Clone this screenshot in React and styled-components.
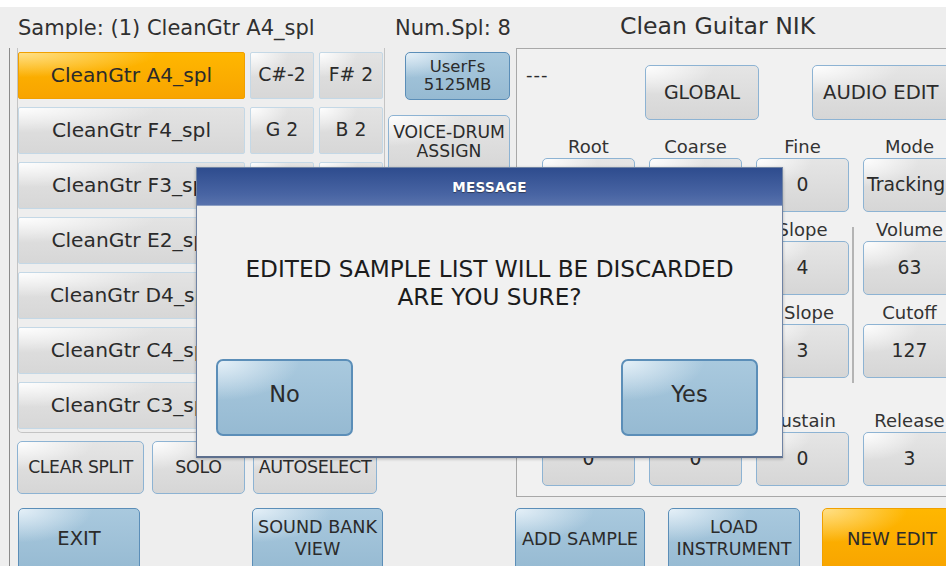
import React from 'react';
import styled, { createGlobalStyle, css } from 'styled-components';

const GlobalStyle = createGlobalStyle`
  html, body {
    margin: 0;
    padding: 0;
    background: #ffffff;
  }
  body {
    font-family: "DejaVu Sans", "Liberation Sans", sans-serif;
  }
`;

// glossy highlight in the upper left corner, shared by every pad
const gloss = (c) =>
  `radial-gradient(ellipse 85% 75% at 0% 0%, ${c} 0%, rgba(255,255,255,0) 72%)`;

const tones = {
  gray: {
    bg: `${gloss('rgba(255,255,255,0.95)')}, linear-gradient(#e5e5e5, #d6d6d6)`,
    border: '#8db3d3',
  },
  list: {
    bg: `${gloss('rgba(255,255,255,0.95)')}, linear-gradient(#e3e3e3, #d7d7d7)`,
    border: '#c4d8e6',
  },
  blue: {
    bg: `${gloss('rgba(232,242,249,0.95)')}, linear-gradient(#a9c9de, #96bad2)`,
    border: '#5b8eb8',
  },
  orange: {
    bg: `${gloss('rgba(255,228,150,0.9)')}, linear-gradient(#ffb700, #f8a400)`,
    border: '#f0a000',
  },
};

const Screen = styled.div`
  position: relative;
  width: 946px;
  height: 566px;
  box-sizing: border-box;
  border-top: 7px solid #ffffff;
  background: #eeeeee;
  overflow: hidden;
  color: #2b2b2b;
`;

const Header = styled.div`
  height: 41px;
  display: grid;
  grid-template-columns: 377px 122px 1fr;
  align-items: center;
  padding-left: 18px;
  font-size: 21px;
  color: #303030;
  white-space: nowrap;
`;

const Title = styled.div`
  padding-left: 103px;
  font-size: 23.6px;
  margin-top: -4px;
`;

const Content = styled.div`
  margin-left: 9px;
  border-left: 1px solid #8a8a8a;
`;

const Main = styled.div`
  display: flex;
  height: 452px;
`;

const LeftCol = styled.div`
  width: 368px;
  flex-shrink: 0;
  padding-left: 7px;
  display: flex;
  flex-direction: column;
`;

const ListBox = styled.div`
  height: 385px;
  flex-shrink: 0;
  box-sizing: border-box;
  border: 1px solid #c4c4c4;
  border-top: none;
  border-radius: 0 0 5px 5px;
  padding: 4px 0 0 0;
  display: grid;
  grid-template-columns: 227px 64px 64px;
  grid-auto-rows: 47px;
  column-gap: 5px;
  row-gap: 8px;
`;

const Pad = styled.div`
  display: flex;
  flex-shrink: 0;
  align-items: center;
  justify-content: center;
  text-align: center;
  box-sizing: border-box;
  border-radius: ${(p) => p.$radius || 5}px;
  border: 1.5px solid ${(p) => tones[p.$tone || 'gray'].border};
  background: ${(p) => tones[p.$tone || 'gray'].bg};
  font-size: ${(p) => p.$size || 18}px;
  line-height: 1.2;
  white-space: nowrap;
  color: #2b2b2b;
  ${(p) =>
    p.$w &&
    css`
      width: ${p.$w}px;
    `}
  ${(p) =>
    p.$h &&
    css`
      height: ${p.$h}px;
    `}
`;

const ActionRow = styled.div`
  display: flex;
  gap: 8px;
  margin-top: 8px;
  height: 53px;
  letter-spacing: -0.3px;
`;

const MidCol = styled.div`
  width: 124px;
  flex-shrink: 0;
  margin-left: 3px;
  display: flex;
  flex-direction: column;
  align-items: flex-start;
`;

const RightPanel = styled.div`
  width: 450px;
  height: 449px;
  flex-shrink: 0;
  margin-left: 4px;
  box-sizing: border-box;
  border: 1px solid #a8a8a8;
  background: #f1f1f1;
  display: flex;
  flex-direction: column;
`;

const TopBar = styled.div`
  display: flex;
  flex-shrink: 0;
  align-items: flex-start;
  padding: 16px 0 0 9px;
  height: 71px;
`;

const Dash = styled.div`
  width: 119px;
  font-size: 18px;
  line-height: 20px;
  letter-spacing: 1px;
`;

// value columns with a thin spacer column for the divider line
const ParamGrid = styled.div`
  display: grid;
  grid-template-columns: 93px 14px 93px 14px 93px 3px 2px 9px 93px;
  row-gap: 7px;
  padding-left: 25px;
`;

const paramCols = [1, 3, 5, 9];

const Param = styled.div`
  grid-column: ${(p) => p.$col};
  display: flex;
  flex-direction: column;
  ${(p) =>
    p.$late &&
    css`
      margin-top: 25px;
    `}
`;

const Label = styled.div`
  height: 22px;
  line-height: 22px;
  text-align: center;
  font-size: 18px;
  color: #333;
`;

const Divider = styled.div`
  grid-column: 7;
  grid-row: 2 / span 2;
  margin: 8px 0 -5px;
  background: #b4b4b4;
`;

const Footer = styled.div`
  display: flex;
  padding: 8px 0 0 8px;
  height: 66px;
  box-sizing: border-box;
`;

const Dialog = styled.div`
  position: absolute;
  left: 196px;
  top: 160px;
  width: 587px;
  height: 291px;
  box-sizing: border-box;
  border: 1px solid #6f83a4;
  border-bottom: 2px solid #5d6f8e;
  background: #f1f1f1;
  display: flex;
  flex-direction: column;
  box-shadow: 0 1px 3px rgba(0, 0, 0, 0.25);
`;

const DialogTitle = styled.div`
  height: 37px;
  display: flex;
  align-items: center;
  justify-content: center;
  background: linear-gradient(#2e4c8e, #4864a3 70%, #5872ac);
  border-bottom: 1px solid #8ea0c4;
  color: #ffffff;
  font-weight: bold;
  font-size: 13.5px;
  letter-spacing: 0.3px;
  text-shadow: 0 1px 1px #303a55;
`;

const DialogText = styled.div`
  margin-top: 49px;
  text-align: center;
  font-size: 23.2px;
  line-height: 28px;
  color: #1c1c1c;
`;

const DialogButtons = styled.div`
  display: flex;
  justify-content: space-between;
  padding: 0 24px 0 19px;
  margin-top: 48px;
`;

const samples = [
  ['CleanGtr A4_spl', 'C#-2', 'F# 2'],
  ['CleanGtr F4_spl', 'G 2', 'B 2'],
  ['CleanGtr F3_spl', 'C 3', 'E 3'],
  ['CleanGtr E2_spl', 'F 3', 'A 3'],
  ['CleanGtr D4_spl', 'A#3', 'D 4'],
  ['CleanGtr C4_spl', 'D#4', 'G 4'],
  ['CleanGtr C3_spl', 'G#4', 'G 8'],
];

const params = [
  ['Root', 'A4'],
  ['Coarse', '0'],
  ['Fine', '0'],
  ['Mode', 'Tracking'],
  ['Low Key', 'C-2'],
  ['High Key', 'G 8'],
  ['Slope', '4'],
  ['Volume', '63'],
  ['Low Vel', '0'],
  ['High Vel', '127'],
  ['F.Slope', '3'],
  ['Cutoff', '127'],
  ['Attack', '0'],
  ['Decay', '0'],
  ['Sustain', '0'],
  ['Release', '3'],
];

const footerButtons = [
  { text: 'EXIT', w: 122, gap: 0, tone: 'blue', size: 19.5 },
  { text: 'SOUND BANK\nVIEW', w: 131, gap: 112, tone: 'blue', size: 17.6 },
  { text: 'ADD SAMPLE', w: 130, gap: 132, tone: 'blue', size: 17.8 },
  { text: 'LOAD\nINSTRUMENT', w: 132, gap: 23, tone: 'blue', size: 17.5 },
  { text: 'NEW EDIT', w: 140, gap: 22, tone: 'orange', size: 18 },
];

const FootPad = styled(Pad)`
  margin-left: ${(p) => p.$gap}px;
  height: 64px;
  align-items: flex-start;
  padding-top: ${(p) => (p.$two ? 7 : 19)}px;
  line-height: 22px;
  white-space: pre-line;
`;

export default function App() {
  return (
    <>
      <GlobalStyle />
      <Screen>
        <Header>
          <div>Sample: (1) CleanGtr A4_spl</div>
          <div>Num.Spl: 8</div>
          <Title>Clean Guitar NIK</Title>
        </Header>

        <Content>
          <Main>
            <LeftCol>
              <ListBox>
                {samples.map(([name, lo, hi], i) => (
                  <React.Fragment key={name}>
                    <Pad $tone={i === 0 ? 'orange' : 'list'} $size={20.2} $radius={2}>
                      {name}
                    </Pad>
                    <Pad $tone="list" $size={18.8} $radius={2}>{lo}</Pad>
                    <Pad $tone="list" $size={18.8} $radius={2}>{hi}</Pad>
                  </React.Fragment>
                ))}
              </ListBox>
              <ActionRow>
                <Pad $w={127} $size={17.2}>CLEAR SPLIT</Pad>
                <Pad $w={93} $size={17.4}>SOLO</Pad>
                <Pad $w={124} $size={17.6}>AUTOSELECT</Pad>
              </ActionRow>
            </LeftCol>

            <MidCol>
              <Pad $tone="blue" $w={105} $h={48} $size={16.5} style={{ marginLeft: 17, marginTop: 4, lineHeight: '18px' }}>
                UserFs
                <br />
                5125MB
              </Pad>
              <Pad $w={122} $h={58} $size={17.2} style={{ marginTop: 15, alignItems: 'flex-start', paddingTop: 7, lineHeight: '19px' }}>
                VOICE-DRUM
                <br />
                ASSIGN
              </Pad>
            </MidCol>

            <RightPanel>
              <TopBar>
                <Dash>---</Dash>
                <Pad $w={114} $h={55} $size={19}>GLOBAL</Pad>
                <Pad $w={145} $h={55} $size={19.6} style={{ marginLeft: 53, justifyContent: 'flex-start', paddingLeft: 10 }}>
                  AUDIO EDIT
                </Pad>
              </TopBar>
              <ParamGrid>
                {params.map(([label, value], i) => (
                  <Param key={label} $col={paramCols[i % 4]} $late={i >= 12}>
                    <Label>{label}</Label>
                    <Pad
                      $h={54}
                      $size={18.8}
                      style={value === 'Tracking' ? { justifyContent: 'flex-start', paddingLeft: 3 } : undefined}
                    >
                      {value}
                    </Pad>
                  </Param>
                ))}
                <Divider />
              </ParamGrid>
            </RightPanel>
          </Main>

          <Footer>
            {footerButtons.map((b) => (
              <FootPad
                key={b.text}
                $tone={b.tone}
                $w={b.w}
                $gap={b.gap}
                $size={b.size}
                $two={b.text.includes('\n')}
              >
                {b.text}
              </FootPad>
            ))}
          </Footer>
        </Content>

        <Dialog>
          <DialogTitle>MESSAGE</DialogTitle>
          <DialogText>
            EDITED SAMPLE LIST WILL BE DISCARDED
            <br />
            ARE YOU SURE?
          </DialogText>
          <DialogButtons>
            <Pad $tone="blue" $w={137} $h={77} $size={22.5} $radius={7} style={{ borderWidth: 2, paddingBottom: 6 }}>
              No
            </Pad>
            <Pad $tone="blue" $w={137} $h={77} $size={22.5} $radius={7} style={{ borderWidth: 2, paddingBottom: 6 }}>
              Yes
            </Pad>
          </DialogButtons>
        </Dialog>
      </Screen>
    </>
  );
}
